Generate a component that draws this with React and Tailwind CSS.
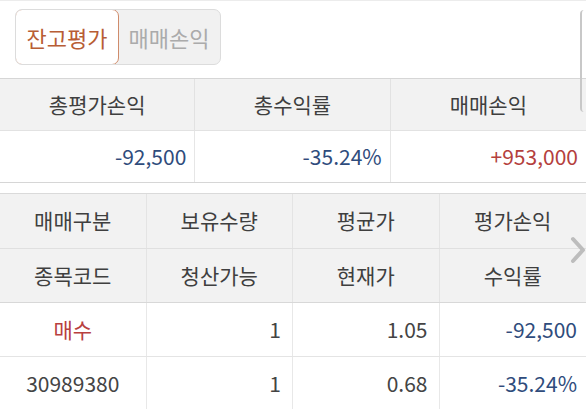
import React from 'react'

const font = { fontFamily: '"Noto Sans CJK KR", "Noto Sans", sans-serif' }

const summaryHead = ['총평가손익', '총수익률', '매매손익']
const summaryVals = [
  { v: '-92,500', c: 'text-[#2f4c7c]' },
  { v: '-35.24%', c: 'text-[#2f4c7c]' },
  { v: '+953,000', c: 'text-[#b4403d]' },
]

const detailHead1 = ['매매구분', '보유수량', '평균가', '평가손익']
const detailHead2 = ['종목코드', '청산가능', '현재가', '수익률']

const App = () => {
  return (
    <div className="relative w-[586px] h-[409px] overflow-hidden bg-white border-t border-[#ececec]" style={font}>
      {/* Tabs */}
      <div className="h-[77px] pt-[8px] pl-[15px]">
        <div className="flex w-[206px] h-[56px] rounded-[7px] border border-[#dcdcdc] bg-[#f1f1f1] overflow-hidden">
          <div className="flex-1 flex items-center justify-center bg-white border border-[#cf8c6c] rounded-[7px] -m-px text-[22px] text-[#b85d35]">
            잔고평가
          </div>
          <div className="flex-1 flex items-center justify-center text-[22px] text-[#ababab]">
            매매손익
          </div>
        </div>
      </div>

      {/* Summary */}
      <div className="border-t border-[#d6d6d6] border-b">
        <div className="grid grid-cols-3 h-[52px] bg-[#f2f2f2] border-b border-[#e2e2e2]">
          {summaryHead.map((h, i) => (
            <div key={i} className={`flex items-center justify-center text-[21px] text-[#3f3f3f] ${i < 2 ? 'border-r border-[#e2e2e2]' : ''}`}>
              {h}
            </div>
          ))}
        </div>
        <div className="grid grid-cols-3 h-[51px]">
          {summaryVals.map((s, i) => (
            <div key={i} className={`flex items-center justify-end pr-[8px] text-[21px] ${s.c} ${i < 2 ? 'border-r border-[#e6e6e6]' : ''}`}>
              {s.v}
            </div>
          ))}
        </div>
      </div>

      {/* Detail */}
      <div className="mt-[10px] border-t border-[#dadada]">
        <div className="bg-[#f2f2f2] border-b border-[#d8d8d8]">
          <div className="grid grid-cols-4 h-[55px] border-b border-[#e0e0e0]">
            {detailHead1.map((h, i) => (
              <div key={i} className={`flex items-center justify-center text-[21px] text-[#3f3f3f] ${i < 3 ? 'border-r border-[#e4e4e4]' : ''}`}>
                {h}
              </div>
            ))}
          </div>
          <div className="grid grid-cols-4 h-[53px]">
            {detailHead2.map((h, i) => (
              <div key={i} className={`flex items-center justify-center text-[21px] text-[#3f3f3f] ${i < 3 ? 'border-r border-[#e4e4e4]' : ''}`}>
                {h}
              </div>
            ))}
          </div>
        </div>
        <div className="grid grid-cols-4 h-[54px] border-b border-[#e4e4e4] text-[21px]">
          <div className="flex items-center justify-center text-[#b8403f] border-r border-[#e8e8e8]">매수</div>
          <div className="flex items-center justify-end pr-[11px] text-[#444] border-r border-[#e8e8e8]">1</div>
          <div className="flex items-center justify-end pr-[11px] text-[#444] border-r border-[#e8e8e8]">1.05</div>
          <div className="flex items-center justify-end pr-[9px] text-[#2f4c7c]">-92,500</div>
        </div>
        <div className="grid grid-cols-4 h-[54px] text-[21px]">
          <div className="flex items-center justify-center text-[#444] border-r border-[#e8e8e8]">30989380</div>
          <div className="flex items-center justify-end pr-[11px] text-[#444] border-r border-[#e8e8e8]">1</div>
          <div className="flex items-center justify-end pr-[11px] text-[#444] border-r border-[#e8e8e8]">0.68</div>
          <div className="flex items-center justify-end pr-[9px] text-[#2f4c7c]">-35.24%</div>
        </div>
      </div>

      {/* Scroll edge overlay */}
      <div className="absolute left-[580px] top-[9px] w-[10px] h-[102px] border-l-2 border-[#c8c8c8] rounded-l-[4px]" />

      {/* Chevron */}
      <svg className="absolute left-[568px] top-[234px]" width="18" height="30" viewBox="0 0 18 30">
        <path d="M5 4 L15 15 L5 26" fill="none" stroke="#bdbdbd" strokeWidth="4" strokeLinecap="round" strokeLinejoin="round" />
      </svg>
    </div>
  )
}

export default App
